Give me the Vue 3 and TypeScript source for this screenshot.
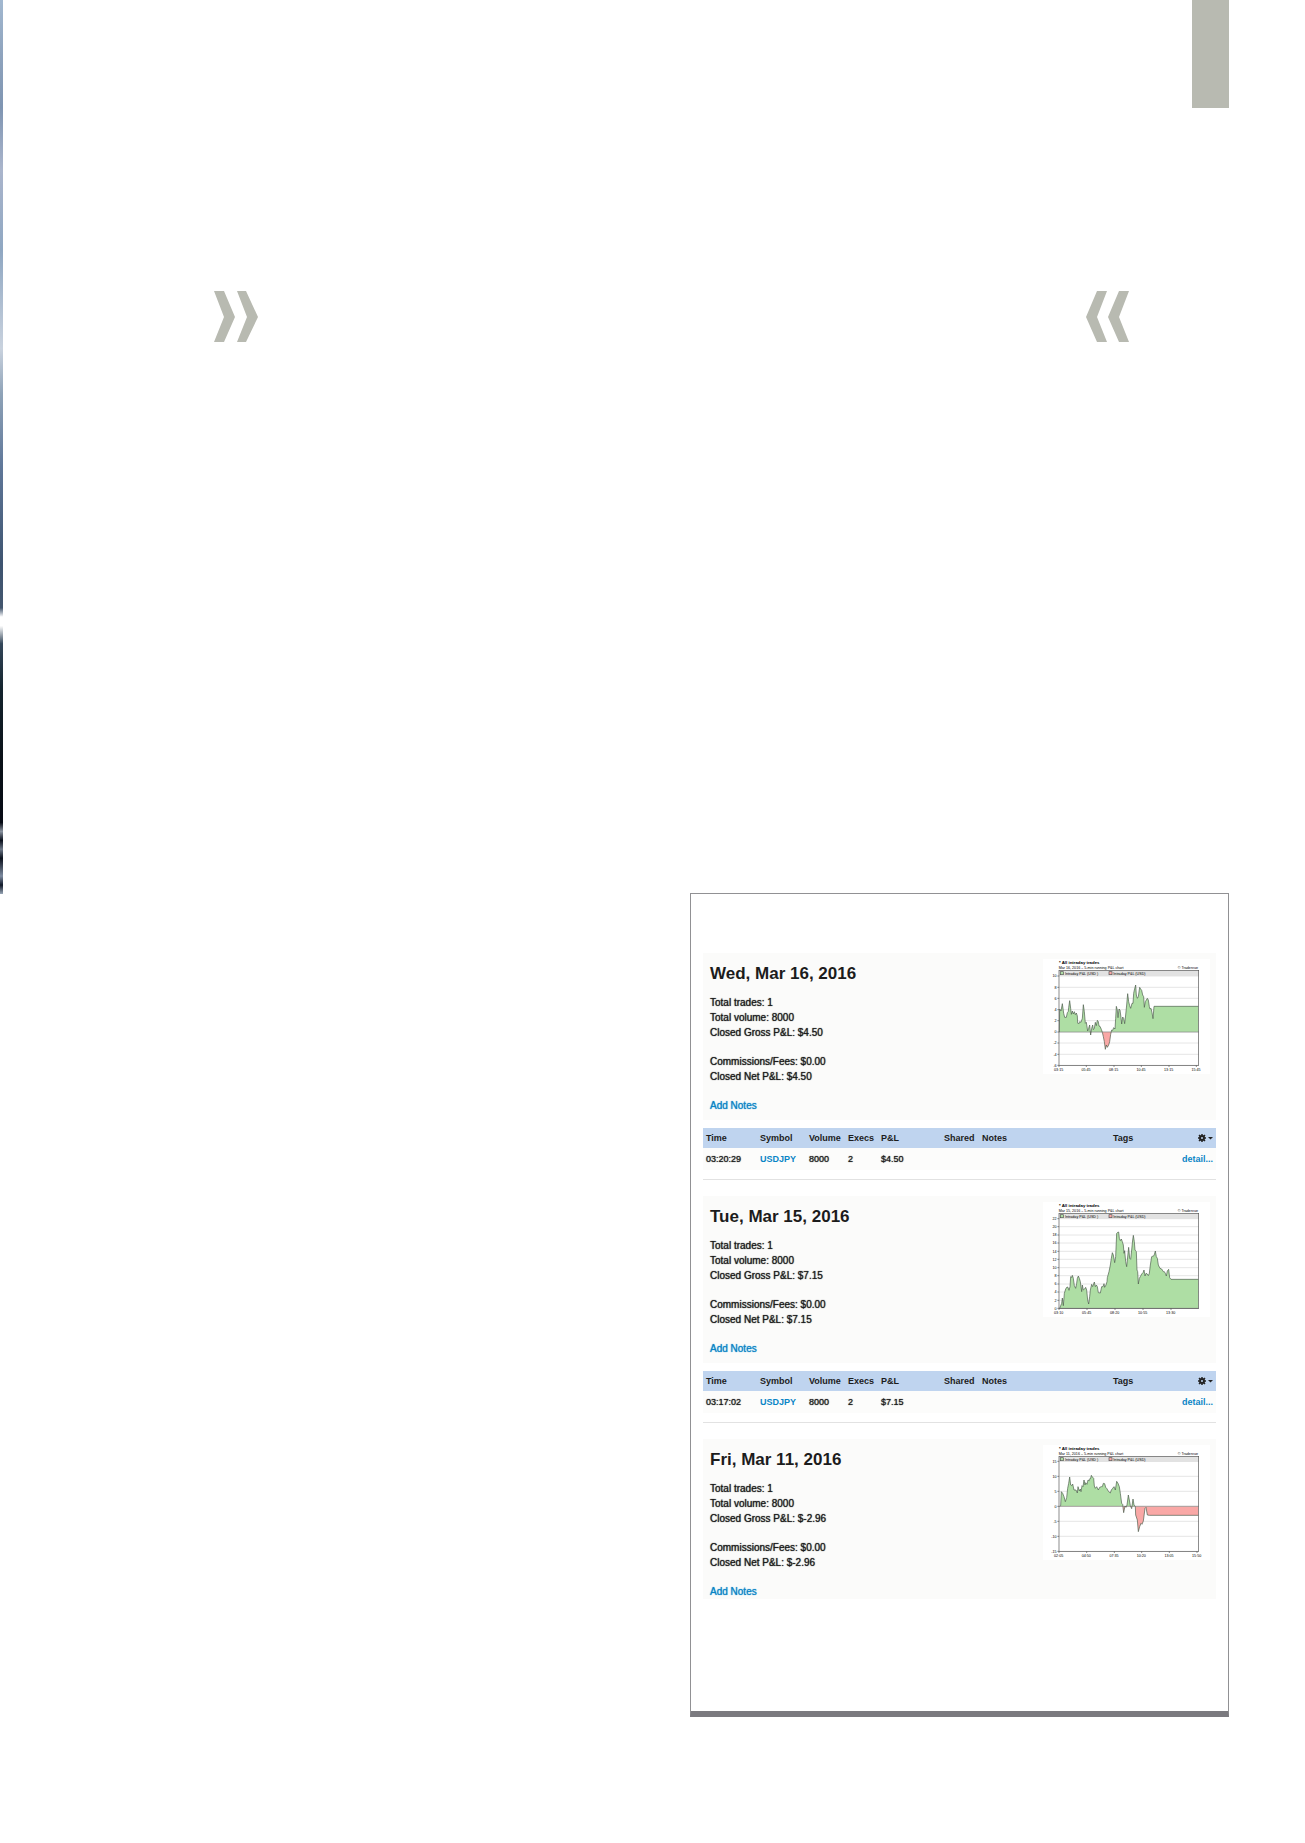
<script setup lang="ts">
interface Tick {
  at: number
  label: string
}

interface Chart {
  id: string
  subtitle: string
  shift: number
  zero: number
  yTicks: Tick[]
  xTicks: Tick[]
  points: string
}

interface Trade {
  time: string
  symbol: string
  volume: number
  execs: number
  pl: string
}

interface Day {
  title: string
  trades: number
  volume: number
  gross: string
  fees: string
  net: string
  chart: Chart
  rows: Trade[]
}

function ticks(labels: string[], start: number, end: number): Tick[] {
  const step = (end - start) / (labels.length - 1)
  return labels.map((label, i) => ({ label, at: Math.round(start + i * step) }))
}

const days: Day[] = [
  {
    title: 'Wed, Mar 16, 2016',
    trades: 1,
    volume: 8000,
    gross: '$4.50',
    fees: '$0.00',
    net: '$4.50',
    chart: {
      id: 'mar16',
      subtitle: 'Mar 16, 2016 – 5-min running P&L chart',
      shift: -24,
      zero: 261,
      yTicks: ticks(['10', '8', '6', '4', '2', '0', '-2', '-4', '-6'], 93, 361),
      xTicks: ticks(['03:15', '05:45', '08:15', '10:45', '13:15', '15:45'], 71, 483),
      points:
        '73,261 74,192 78,198 82,176 86,205 89,217 94,217 97,203 100,199 101,188 104,167 107,190 109,208 112,198 115,207 118,200 121,209 124,204 127,213 128,234 131,237 134,230 138,232 142,220 145,179 148,200 151,235 154,232 158,258 161,250 164,240 167,270 170,250 173,240 175,254 178,250 181,232 184,242 187,226 190,230 192,243 195,244 199,253 202,262 205,275 208,290 211,313 214,300 217,307 221,300 224,290 227,268 230,255 233,256 236,248 240,252 242,220 244,184 247,195 249,218 252,192 255,195 258,218 260,237 263,216 266,220 269,236 272,210 275,180 278,146 281,170 284,182 287,190 291,175 294,175 296,145 298,135 302,120 304,150 307,160 310,155 314,127 317,132 320,136 323,150 326,155 328,187 331,170 334,165 337,160 340,165 343,185 345,192 348,190 351,203 354,221 357,184 490,184',
    },
    rows: [{ time: '03:20:29', symbol: 'USDJPY', volume: 8000, execs: 2, pl: '$4.50' }],
  },
  {
    title: 'Tue, Mar 15, 2016',
    trades: 1,
    volume: 8000,
    gross: '$7.15',
    fees: '$0.00',
    net: '$7.15',
    chart: {
      id: 'mar15',
      subtitle: 'Mar 15, 2016 – 5-min running P&L chart',
      shift: -18,
      zero: 355,
      yTicks: ticks(['22', '20', '18', '16', '14', '12', '10', '8', '6', '4', '2', '0'], 86, 355),
      xTicks: ticks(['03:10', '05:45', '08:20', '10:55', '13:30'], 71, 407),
      points:
        '74,355 80,340 82,324 85,347 88,310 92,297 96,291 99,292 102,301 105,290 107,260 110,262 112,256 115,265 118,287 122,295 125,280 127,265 130,258 133,265 136,275 140,305 142,285 145,300 149,297 152,292 155,300 158,330 161,342 164,320 166,300 170,283 173,290 178,276 181,290 184,285 187,290 190,308 196,309 200,290 204,290 207,281 209,292 213,285 216,275 217,263 222,245 226,225 229,205 232,188 235,195 239,218 242,200 245,130 248,127 251,126 253,145 256,152 259,147 262,155 265,165 267,190 269,182 272,215 275,230 277,210 281,172 284,205 287,208 290,180 293,150 295,136 298,155 300,180 304,185 306,240 308,245 310,282 313,265 316,260 320,252 324,248 327,240 330,258 333,250 337,252 340,257 343,250 346,225 350,200 357,197 361,183 364,200 367,205 370,225 375,235 380,237 385,245 388,245 391,250 394,258 397,243 401,238 404,263 408,268 490,268',
    },
    rows: [{ time: '03:17:02', symbol: 'USDJPY', volume: 8000, execs: 2, pl: '$7.15' }],
  },
  {
    title: 'Fri, Mar 11, 2016',
    trades: 1,
    volume: 8000,
    gross: '$-2.96',
    fees: '$0.00',
    net: '$-2.96',
    chart: {
      id: 'mar11',
      subtitle: 'Mar 11, 2016 – 5-min running P&L chart',
      shift: -12,
      zero: 214,
      yTicks: ticks(['15', '10', '5', '0', '-5', '-10', '-15'], 79, 349),
      xTicks: ticks(['02:05', '04:50', '07:35', '10:20', '13:05', '15:50'], 71, 485),
      points:
        '74,214 77,212 79,170 83,175 87,185 91,200 95,188 98,160 101,145 104,126 107,150 110,152 113,147 117,165 120,165 123,165 127,174 129,155 133,168 136,162 138,170 141,152 144,155 147,135 150,150 152,143 156,148 159,135 163,137 165,130 167,130 169,121 172,126 176,130 178,153 181,160 185,155 190,165 194,157 199,155 202,155 205,145 209,146 212,157 215,160 218,165 221,170 226,174 229,165 233,160 237,155 241,165 245,139 249,145 253,155 256,175 260,205 263,208 266,233 270,213 273,217 276,210 280,180 283,195 286,212 290,221 294,192 297,210 301,215 302,240 307,255 310,290 314,275 318,265 321,268 325,258 330,220 333,217 337,240 343,241 490,241',
    },
    rows: [],
  },
]
</script>

<template>
  <div class="page">
    <div class="photo-edge"></div>
    <main class="sheet">
      <div class="tab-row"><div class="tab"></div></div>

      <div class="quotes">
        <svg width="44" height="51" viewBox="0 0 44 51" aria-hidden="true">
          <path d="M0 0H10L21 26L10 51H0L10 26ZM23 0H32L44 26L32 51H23L33 26Z" />
        </svg>
        <svg width="44" height="51" viewBox="0 0 44 51" aria-hidden="true">
          <path d="M21 0H11L0 26L11 51H21L11 26ZM43 0H33L22 26L33 51H43L33 26Z" />
        </svg>
      </div>

      <div class="columns">
        <section class="panel">
          <article v-for="day in days" :key="day.title" class="day">
            <div class="summary" :class="{ short: !day.rows.length }">
              <div class="facts">
                <h2>{{ day.title }}</h2>
                <p>
                  Total trades: {{ day.trades }}<br />
                  Total volume: {{ day.volume }}<br />
                  Closed Gross P&amp;L: {{ day.gross }}
                </p>
                <p>
                  Commissions/Fees: {{ day.fees }}<br />
                  Closed Net P&amp;L: {{ day.net }}
                </p>
                <p><a href="#">Add Notes</a></p>
              </div>

              <svg class="chart" width="167" height="115" viewBox="24 18 501 345">
                <rect x="24" y="18" width="501" height="345" fill="#fff" />
                <text x="72" y="33" class="c-title">* All intraday trades</text>
                <text x="71" y="47" class="c-text">{{ day.chart.subtitle }}</text>
                <text x="489" y="47" class="c-text" text-anchor="end">© Tradervue</text>
                <g :transform="`translate(0 ${day.chart.shift})`">
                  <clipPath :id="`up-${day.chart.id}`">
                    <rect x="72" y="60" width="420" :height="day.chart.zero - 60" />
                  </clipPath>
                  <clipPath :id="`down-${day.chart.id}`">
                    <rect x="72" :y="day.chart.zero" width="420" height="140" />
                  </clipPath>
                  <line
                    v-for="t in day.chart.yTicks"
                    :key="t.label"
                    x1="72"
                    x2="491"
                    :y1="t.at"
                    :y2="t.at"
                    class="c-grid"
                  />
                  <polygon
                    :points="`${day.chart.points} 490,${day.chart.zero} 73,${day.chart.zero}`"
                    fill="#aedea4"
                    :clip-path="`url(#up-${day.chart.id})`"
                  />
                  <polygon
                    :points="`${day.chart.points} 490,${day.chart.zero} 73,${day.chart.zero}`"
                    fill="#f9a8a6"
                    :clip-path="`url(#down-${day.chart.id})`"
                  />
                  <line x1="72" x2="491" :y1="day.chart.zero" :y2="day.chart.zero" class="c-zero" />
                  <polyline :points="day.chart.points" class="c-curve" />
                  <g v-for="t in day.chart.yTicks" :key="'y' + t.label">
                    <line x1="67" x2="72" :y1="t.at" :y2="t.at" class="c-axis" />
                    <text x="65" :y="t.at + 4" class="c-text" text-anchor="end">{{ t.label }}</text>
                  </g>
                </g>
                <rect x="72" y="52" width="419" height="17" fill="#e2e2e2" />
                <rect x="76" y="56" width="9" height="9" fill="#aedea4" class="c-axis" />
                <text x="90" y="65" class="c-text">Intraday P&amp;L (USD )</text>
                <rect x="222" y="56" width="9" height="9" fill="#f9a8a6" class="c-axis" />
                <text x="235" y="65" class="c-text">Intraday P&amp;L (USD)</text>
                <rect x="72" y="52" width="419" height="285" fill="none" class="c-frame" />
                <g v-for="t in day.chart.xTicks" :key="'x' + t.label">
                  <line :x1="t.at + 1" :x2="t.at + 1" y1="337" y2="342" class="c-axis" />
                  <text :x="t.at" y="354" class="c-text" text-anchor="middle">{{ t.label }}</text>
                </g>
              </svg>
            </div>

            <table v-if="day.rows.length">
              <colgroup>
                <col class="w-time" />
                <col class="w-symbol" />
                <col class="w-volume" />
                <col class="w-execs" />
                <col class="w-pl" />
                <col class="w-shared" />
                <col />
                <col class="w-tags" />
                <col class="w-menu" />
              </colgroup>
              <thead>
                <tr>
                  <th>Time</th>
                  <th>Symbol</th>
                  <th>Volume</th>
                  <th>Execs</th>
                  <th>P&amp;L</th>
                  <th>Shared</th>
                  <th>Notes</th>
                  <th>Tags</th>
                  <th class="end">
                    <button type="button" aria-label="Table options">
                      <svg width="15" height="8" viewBox="0 0 30 16" aria-hidden="true">
                        <circle cx="8" cy="8" r="4" fill="none" stroke="#222" stroke-width="4" />
                        <path
                          d="M8 0V3M8 13V16M0 8H3M13 8H16M2 2L5 5M11 11L14 14M14 2L11 5M5 11L2 14"
                          stroke="#222"
                          stroke-width="3"
                        />
                        <path d="M20 6H30L25 11Z" fill="#222" />
                      </svg>
                    </button>
                  </th>
                </tr>
              </thead>
              <tbody>
                <tr v-for="row in day.rows" :key="row.time">
                  <td>{{ row.time }}</td>
                  <td><a href="#">{{ row.symbol }}</a></td>
                  <td>{{ row.volume }}</td>
                  <td>{{ row.execs }}</td>
                  <td>{{ row.pl }}</td>
                  <td></td>
                  <td></td>
                  <td></td>
                  <td class="end"><a href="#">detail...</a></td>
                </tr>
              </tbody>
            </table>
          </article>
        </section>
      </div>
    </main>
  </div>
</template>

<style>
body {
  margin: 0;
  background: #fff;
}
</style>

<style scoped>
.page {
  display: flex;
  align-items: flex-start;
  font-family: 'Liberation Sans', Arial, sans-serif;
  color: #1c1c1c;
}

.photo-edge {
  flex: 0 0 3px;
  height: 894px;
  background: linear-gradient(
    #a2b8d0 0%,
    #8fa4be 6%,
    #7f95b2 12%,
    #aab5cc 19%,
    #8fa7c2 28%,
    #c9d2de 39%,
    #8fa3b8 44%,
    #60789a 52%,
    #3e5470 63%,
    #43566e 68%,
    #ffffff 69%,
    #ffffff 70%,
    #34475a 72%,
    #14242e 77%,
    #0a1118 85%,
    #060a14 92%,
    #8a93a0 93%,
    #0a101c 94%,
    #6d7888 95%,
    #0a101c 96%,
    #7d8ba0 98%,
    #101828 99%,
    #9aa8b8 100%
  );
}

.sheet {
  flex: 1;
  min-width: 0;
  padding-bottom: 125px;
}

.tab-row {
  display: flex;
  justify-content: flex-end;
  padding-right: 76px;
}

.tab {
  width: 37px;
  height: 108px;
  background: #b8bab1;
}

.quotes {
  display: flex;
  justify-content: space-between;
  margin-top: 183px;
  padding: 0 175px 0 211px;
}

.quotes svg {
  display: block;
  fill: #b8bab1;
}

.columns {
  display: grid;
  grid-template-columns: 687fr 539fr;
  margin-top: 551px;
  padding-right: 76px;
}

.panel {
  grid-column: 2;
  padding: 59px 12px 112px;
  border: 1px solid #919194;
  border-bottom: 6px solid #7b7a7f;
}

.day + .day {
  margin-top: 16px;
}

.summary {
  display: flex;
  justify-content: space-between;
  align-items: flex-start;
  padding: 6px 6px 7px 7px;
  background: #fbfbfa;
}

.summary.short {
  padding-bottom: 0;
}

.facts {
  padding-top: 3px;
}

h2 {
  margin: 0 0 9px;
  font-size: 17px;
  line-height: 24px;
  font-weight: bold;
}

p {
  margin: 0;
  font-size: 10px;
  line-height: 15px;
  text-shadow: 0 0 1px currentColor;
}

p + p {
  margin-top: 14px;
}

a {
  color: #0a84c6;
  text-decoration: none;
}

.chart {
  display: block;
  flex: none;
}

.c-title {
  font-size: 13px;
  font-weight: bold;
}

.c-text {
  font-size: 11px;
}

.c-grid {
  stroke: #d9d9d9;
  stroke-width: 2px;
}

.c-zero {
  stroke: #888;
  stroke-width: 2px;
}

.c-curve {
  fill: none;
  stroke: #4a5a4a;
  stroke-width: 2px;
}

.c-axis,
.c-frame {
  stroke: #555;
  stroke-width: 2px;
}

table {
  width: 100%;
  margin-top: 8px;
  padding-bottom: 9px;
  border-bottom: 1px solid #e2e2e2;
  border-spacing: 0;
  table-layout: fixed;
  font-size: 9px;
  line-height: 12px;
}

th,
td {
  padding: 4px 0 4px 3px;
  text-align: left;
  white-space: nowrap;
}

th {
  background: #bfd4ef;
  font-weight: bold;
}

td {
  padding: 5px 0 5px 3px;
  background: #fcfcfb;
  text-shadow: 0 0 1px currentColor;
}

td a {
  font-weight: bold;
  text-shadow: none;
}

.end {
  padding-left: 0;
  padding-right: 3px;
  text-align: right;
}

button {
  display: block;
  margin-left: auto;
  padding: 0;
  border: 0;
  background: none;
}

button svg {
  display: block;
}

.w-time {
  width: 54px;
}
.w-symbol {
  width: 49px;
}
.w-volume {
  width: 39px;
}
.w-execs {
  width: 33px;
}
.w-pl {
  width: 63px;
}
.w-shared {
  width: 38px;
}
.w-tags {
  width: 66px;
}
.w-menu {
  width: 40px;
}
</style>
